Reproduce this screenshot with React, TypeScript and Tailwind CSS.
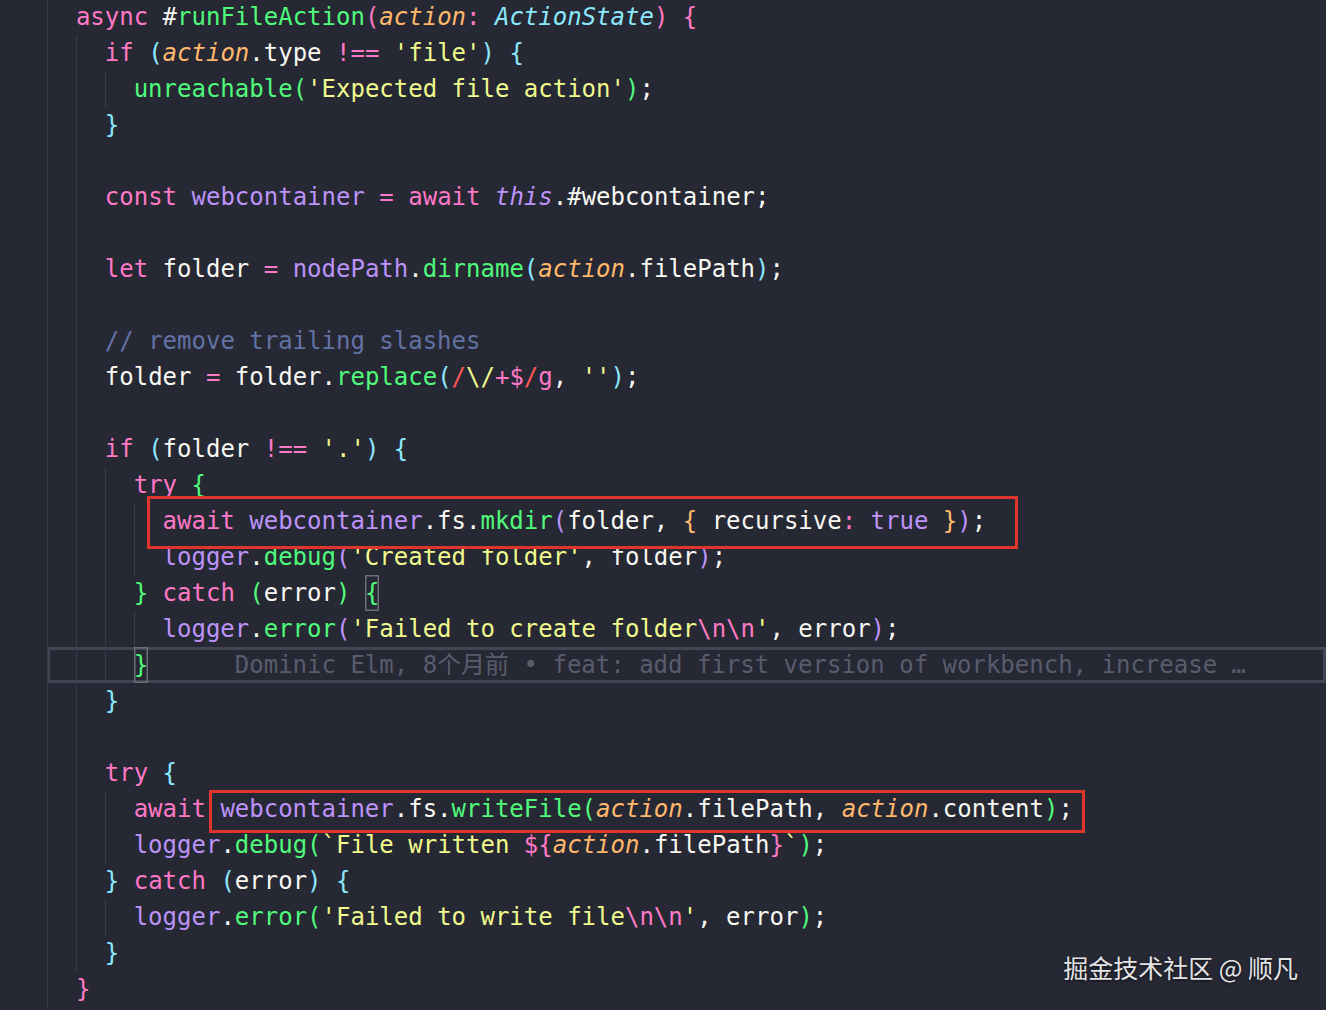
type Tok = [string, string];

const K = "text-[#ff79c6]";
const F = "text-[#50fa7b]";
const S = "text-[#f1fa8c]";
const P = "text-[#ffb86c] italic";
const T = "text-[#8be9fd] italic";
const C = "text-[#6272a4]";
const V = "text-[#bd93f9]";
const VI = "text-[#bd93f9] italic";
const W = "text-[#f8f8f2]";
const R = "text-[#ff5555]";
const B0 = "text-[#ff79c6]";
const B1 = "text-[#8be9fd]";
const B2 = "text-[#50fa7b]";
const B3 = "text-[#bd93f9]";
const B4 = "text-[#ffb86c]";
const MATCH = "match";

type Line = { indent: number; toks: Tok[]; blame?: boolean };

const lines: Line[] = [
  { indent: 1, toks: [[K, "async"], [W, " #"], [F, "runFileAction"], [B0, "("], [P, "action"], [K, ":"], [W, " "], [T, "ActionState"], [B0, ")"], [W, " "], [B0, "{"]] },
  { indent: 2, toks: [[K, "if"], [W, " "], [B1, "("], [P, "action"], [W, ".type "], [K, "!=="], [W, " "], [S, "'file'"], [B1, ")"], [W, " "], [B1, "{"]] },
  { indent: 3, toks: [[F, "unreachable"], [B2, "("], [S, "'Expected file action'"], [B2, ")"], [W, ";"]] },
  { indent: 2, toks: [[B1, "}"]] },
  { indent: 2, toks: [] },
  { indent: 2, toks: [[K, "const"], [W, " "], [V, "webcontainer"], [W, " "], [K, "="], [W, " "], [K, "await"], [W, " "], [VI, "this"], [W, ".#webcontainer;"]] },
  { indent: 2, toks: [] },
  { indent: 2, toks: [[K, "let"], [W, " folder "], [K, "="], [W, " "], [V, "nodePath"], [W, "."], [F, "dirname"], [B1, "("], [P, "action"], [W, ".filePath"], [B1, ")"], [W, ";"]] },
  { indent: 2, toks: [] },
  { indent: 2, toks: [[C, "// remove trailing slashes"]] },
  { indent: 2, toks: [[W, "folder "], [K, "="], [W, " folder."], [F, "replace"], [B1, "("], [R, "/"], [S, "\\/"], [K, "+$"], [R, "/"], [K, "g"], [W, ", "], [S, "''"], [B1, ")"], [W, ";"]] },
  { indent: 2, toks: [] },
  { indent: 2, toks: [[K, "if"], [W, " "], [B1, "("], [W, "folder "], [K, "!=="], [W, " "], [S, "'.'"], [B1, ")"], [W, " "], [B1, "{"]] },
  { indent: 3, toks: [[K, "try"], [W, " "], [B2, "{"]] },
  { indent: 4, toks: [[K, "await"], [W, " "], [V, "webcontainer"], [W, ".fs."], [F, "mkdir"], [B3, "("], [W, "folder, "], [B4, "{"], [W, " recursive"], [K, ":"], [W, " "], [V, "true"], [W, " "], [B4, "}"], [B3, ")"], [W, ";"]] },
  { indent: 4, toks: [[V, "logger"], [W, "."], [F, "debug"], [B3, "("], [S, "'Created folder'"], [W, ", folder"], [B3, ")"], [W, ";"]] },
  { indent: 3, toks: [[B2, "}"], [W, " "], [K, "catch"], [W, " "], [B2, "("], [W, "error"], [B2, ")"], [W, " "], [B2 + " " + MATCH, "{"]] },
  { indent: 4, toks: [[V, "logger"], [W, "."], [F, "error"], [B3, "("], [S, "'Failed to create folder"], [K, "\\n\\n"], [S, "'"], [W, ", error"], [B3, ")"], [W, ";"]] },
  { indent: 3, toks: [[B2 + " " + MATCH, "}"]], blame: true },
  { indent: 2, toks: [[B1, "}"]] },
  { indent: 2, toks: [] },
  { indent: 2, toks: [[K, "try"], [W, " "], [B1, "{"]] },
  { indent: 3, toks: [[K, "await"], [W, " "], [V, "webcontainer"], [W, ".fs."], [F, "writeFile"], [B2, "("], [P, "action"], [W, ".filePath, "], [P, "action"], [W, ".content"], [B2, ")"], [W, ";"]] },
  { indent: 3, toks: [[V, "logger"], [W, "."], [F, "debug"], [B2, "("], [S, "`File written "], [K, "${"], [P, "action"], [W, ".filePath"], [K, "}"], [S, "`"], [B2, ")"], [W, ";"]] },
  { indent: 2, toks: [[B1, "}"], [W, " "], [K, "catch"], [W, " "], [B1, "("], [W, "error"], [B1, ")"], [W, " "], [B1, "{"]] },
  { indent: 3, toks: [[V, "logger"], [W, "."], [F, "error"], [B2, "("], [S, "'Failed to write file"], [K, "\\n\\n"], [S, "'"], [W, ", error"], [B2, ")"], [W, ";"]] },
  { indent: 2, toks: [[B1, "}"]] },
  { indent: 1, toks: [[B0, "}"]] },
];

function CodeLine({ line }: { line: Line }) {
  return (
    <div
      className={`flex h-[36px] items-stretch whitespace-pre ${
        line.blame ? "shadow-[inset_0_0_0_3px_#434555]" : ""
      }`}
    >
      {Array.from({ length: line.indent }).map((_, i) => (
        <span key={i} className="w-[2ch] shrink-0 border-l border-[#3a3c49]" />
      ))}
      <span className="leading-[36px]">
        {line.toks.map(([cls, text], i) =>
          cls.includes(MATCH) ? (
            <span
              key={i}
              className={`${cls.replace(MATCH, "")} inline-block h-[36px] w-[1ch] shadow-[inset_0_0_0_1.5px_#6c6e7a]`}
            >
              {text}
            </span>
          ) : (
            <span key={i} className={cls}>
              {text}
            </span>
          )
        )}
        {line.blame ? (
          <span className="pl-[6ch] text-[#595c6c]">
            Dominic Elm, 8个月前 • feat: add first version of workbench, increase …
          </span>
        ) : null}
      </span>
    </div>
  );
}

export default function App() {
  return (
    <div className="relative h-[1010px] w-[1326px] overflow-hidden bg-[#262834] font-['DejaVu_Sans_Mono','Noto_Sans_CJK_SC',monospace] text-[24px] text-[#f8f8f2]">
      <div className="mt-[-1px] pl-[47px]">
        {lines.map((line, i) => (
          <CodeLine key={i} line={line} />
        ))}
      </div>

      {/* annotation boxes drawn over the code */}
      <div className="absolute left-[147px] top-[496px] h-[53px] w-[871px] border-[3px] border-[#e0352c]" />
      <div className="absolute left-[209px] top-[790px] h-[43px] w-[876px] border-[3px] border-[#e0352c]" />

      <div className="absolute right-[28px] top-[949px] font-['Noto_Sans_CJK_SC',sans-serif] text-[25px] text-[#e4e4e6] [text-shadow:0_1px_3px_rgba(0,0,0,0.7)]">
        掘金技术社区 @ 顺凡
      </div>
    </div>
  );
}
